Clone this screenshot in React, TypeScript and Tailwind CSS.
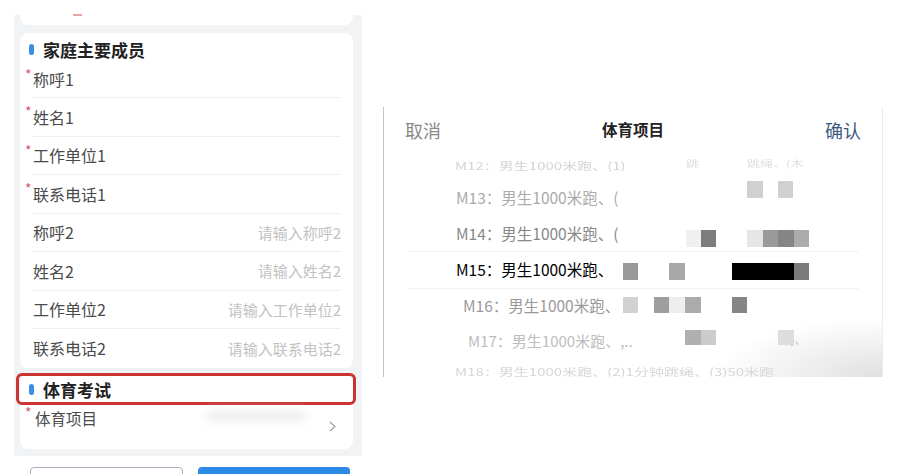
import React from 'react';

const FONT = { fontFamily: '"Noto Sans CJK SC", "Noto Sans", sans-serif' };

type Field = { label: string; required?: boolean; placeholder?: string };

const members: Field[] = [
  { label: '称呼1', required: true },
  { label: '姓名1', required: true },
  { label: '工作单位1', required: true },
  { label: '联系电话1', required: true },
  { label: '称呼2', placeholder: '请输入称呼2' },
  { label: '姓名2', placeholder: '请输入姓名2' },
  { label: '工作单位2', placeholder: '请输入工作单位2' },
  { label: '联系电话2', placeholder: '请输入联系电话2' },
];

// 打码色块 [left, top, width, height, color]
const blocks: [number, number, number, number, string][] = [
  [363, 74, 16, 17, '#d0d0d0'],
  [394, 74, 15, 17, '#d0d0d0'],
  [302, 123, 15, 17, '#f0f0f0'],
  [317, 123, 15, 17, '#7d7d7d'],
  [363, 123, 16, 17, '#e6e6e6'],
  [379, 123, 15, 17, '#9a9a9a'],
  [394, 123, 16, 17, '#858585'],
  [410, 123, 15, 17, '#ababab'],
  [239, 156, 15, 17, '#9a9a9a'],
  [285, 156, 16, 17, '#a8a8a8'],
  [348, 156, 62, 17, '#000000'],
  [410, 156, 15, 17, '#7a7a7a'],
  [239, 190, 15, 16, '#d2d2d2'],
  [270, 190, 15, 16, '#9e9e9e'],
  [285, 190, 16, 16, '#eeeeee'],
  [301, 190, 16, 16, '#ababab'],
  [348, 190, 15, 16, '#868686'],
  [301, 223, 16, 15, '#b0b0b0'],
  [317, 223, 15, 15, '#cccccc'],
  [394, 223, 16, 15, '#dddddd'],
];

function SectionTitle({ text }: { text: string }) {
  return (
    <div className="flex items-center h-[24px] pl-[9px]">
      <span className="w-[5px] h-[11px] rounded-full bg-[#3a8ee6]" />
      <span className="ml-[9px] text-[17px] font-bold text-[#222] leading-none">{text}</span>
    </div>
  );
}

function Row({ field, first, last }: { field: Field; first?: boolean; last?: boolean }) {
  return (
    <div
      className={`relative mx-[12px] flex items-center justify-between ${first ? 'h-[37px]' : 'h-[38.5px]'} ${
        last ? '' : 'border-b border-[#efefef]'
      }`}
    >
      {field.required && (
        <span className="absolute -left-[7px] top-[6px] text-[14px] leading-none text-[#d9576a]">*</span>
      )}
      <span className="ml-[1px] text-[16px] text-[#4a4a4a] leading-none">{field.label}</span>
      {field.placeholder && (
        <span className="text-[15px] text-[#c2c2c2] leading-none">{field.placeholder}</span>
      )}
    </div>
  );
}

function Picker() {
  return (
    <div className="relative ml-[21px] mt-[107px] w-[500px] h-[270px] bg-white border-l border-[#c4c4c4] border-r border-r-[#ececec] overflow-hidden">
      {/* 头部 */}
      <div className="flex items-center justify-between h-[46px] px-[21px]">
        <span className="text-[18px] text-[#8a8a8a] leading-none">取消</span>
        <span className="text-[15.5px] font-bold text-[#222] leading-none">体育项目</span>
        <span className="text-[18px] text-[#3d5a80] leading-none">确认</span>
      </div>

      {/* 滚轮列表 */}
      <div className="flex flex-col">
        <div className="h-[26px] flex items-center pl-[71px] text-[15px] text-[#d4d4d4] scale-y-[0.7] origin-center">
          M12：男生1000米跑、(1)
        </div>
        <div className="h-[38px] flex items-center pl-[72px] text-[15.5px] text-[#ababab]">M13：男生1000米跑、(</div>
        <div className="h-[34px] flex items-center pl-[72px] text-[15.5px] text-[#888]">M14：男生1000米跑、(</div>
        <div className="h-[38px] flex items-center mx-[23px] pl-[49px] border-y border-[#f2f2f2] text-[15.5px] text-black">
          M15：男生1000米跑、
        </div>
        <div className="h-[34px] flex items-center pl-[79px] text-[15.5px] text-[#9a9a9a]">M16：男生1000米跑、</div>
        <div className="h-[36px] flex items-center pl-[84px] text-[15px] text-[#bdbdbd]">M17：男生1000米跑、,..</div>
        <div className="h-[22px] flex items-end pl-[71px] text-[15px] text-[#d6d6d6] overflow-hidden">
          <span className="scale-y-[0.7] origin-top leading-none">M18：男生1000米跑、(2)1分钟跳绳、(3)50米跑</span>
        </div>
      </div>

      {/* 被遮挡的淡色文字 */}
      <span className="absolute left-[302px] top-[50px] text-[13px] text-[#dddddd] leading-none scale-y-[0.7]">跳</span>
      <span className="absolute left-[363px] top-[50px] text-[13px] text-[#dddddd] leading-none scale-y-[0.7]">跳绳、(木</span>
      <span className="absolute left-[396px] top-[224px] text-[14px] text-[#cccccc] leading-none">跳、</span>

      {blocks.map(([l, t, w, h, c], i) => (
        <div
          key={i}
          className="absolute"
          style={{ left: l, top: t, width: w, height: h, background: c }}
        />
      ))}

      <div className="absolute right-0 bottom-0 w-[170px] h-[60px] bg-[radial-gradient(ellipse_at_bottom_right,#e0e0e0,transparent_70%)]" />
    </div>
  );
}

export default function App() {
  return (
    <div className="w-[901px] h-[474px] overflow-hidden bg-white flex" style={FONT}>
      {/* 左侧表单 */}
      <div className="ml-[14px] w-[348px] pt-[15px] shrink-0">
        <div className="bg-[#f2f3f5] pl-[6px] pr-[9px] pb-[7px]">
          <div className="relative h-[10px] bg-white rounded-b-lg">
            <span className="absolute left-[53px] -top-[1px] w-[9px] h-[2px] bg-[#e7a3a8]" />
          </div>

          {/* 家庭主要成员 */}
          <div className="mt-[8px] bg-white rounded-lg pt-[4px]">
            <SectionTitle text="家庭主要成员" />
            {members.map((f, i) => (
              <Row key={f.label} field={f} first={i === 0} last={i === members.length - 1} />
            ))}
          </div>

          {/* 体育考试 */}
          <div className="relative mt-[7px] bg-white rounded-lg pt-[3px]">
            <div className="absolute -left-[4px] -top-[2px] w-[340px] h-[32px] border-[3px] border-[#cc3333] rounded-[6px]" />
            <SectionTitle text="体育考试" />
            <div className="relative mx-[12px] h-[47px] flex items-start">
              <span className="absolute -left-[7px] top-[3px] text-[14px] leading-none text-[#d9576a]">*</span>
              <span className="ml-[3px] mt-[9px] text-[15.5px] text-[#4a4a4a] leading-none">体育项目</span>
              <span className="ml-auto mt-[8px] w-[102px] h-[12px] rounded-full bg-[#f0f0f0] blur-[4px]" />
              <svg className="ml-[22px] mt-[19px] mr-[5px]" width="7" height="11" viewBox="0 0 7 11" fill="none">
                <polyline points="1,1 6,5.5 1,10" stroke="#9a9a9a" strokeWidth="1.1" />
              </svg>
            </div>
          </div>
        </div>

        {/* 底部按钮 */}
        <div className="mt-[11px] flex gap-[15px] pl-[16px]">
          <div className="w-[153px] h-[36px] rounded-[4px] border border-[#a7b0bd] bg-white" />
          <div className="w-[152px] h-[36px] rounded-[4px] bg-[#2a8ae6]" />
        </div>
      </div>

      {/* 右侧选择器 */}
      <Picker />
    </div>
  );
}
